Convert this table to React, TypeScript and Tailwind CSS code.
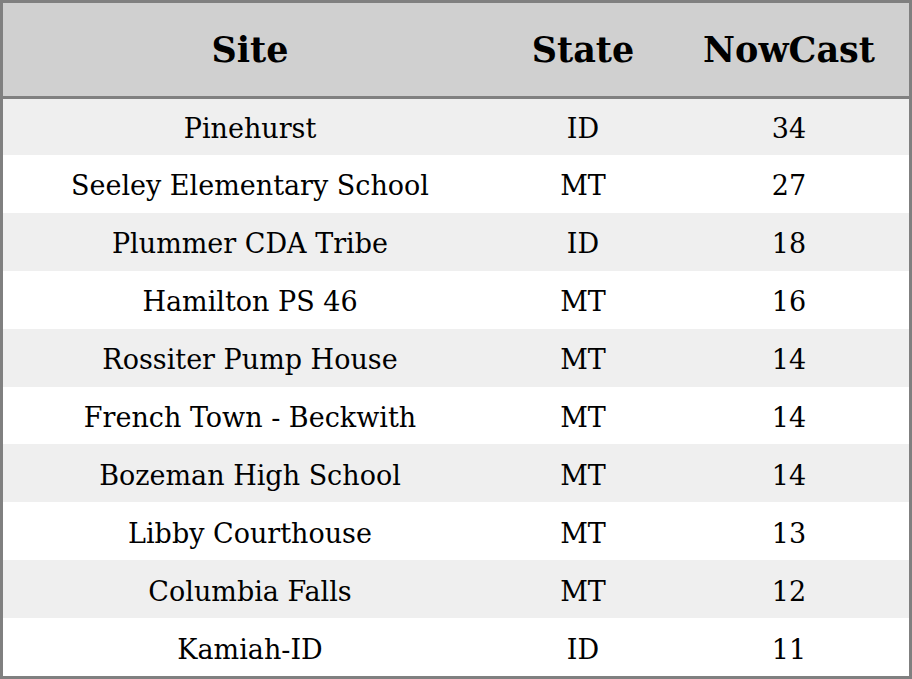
const rows = [
  { site: "Pinehurst", state: "ID", nowcast: 34 },
  { site: "Seeley Elementary School", state: "MT", nowcast: 27 },
  { site: "Plummer CDA Tribe", state: "ID", nowcast: 18 },
  { site: "Hamilton PS 46", state: "MT", nowcast: 16 },
  { site: "Rossiter Pump House", state: "MT", nowcast: 14 },
  { site: "French Town - Beckwith", state: "MT", nowcast: 14 },
  { site: "Bozeman High School", state: "MT", nowcast: 14 },
  { site: "Libby Courthouse", state: "MT", nowcast: 13 },
  { site: "Columbia Falls", state: "MT", nowcast: 12 },
  { site: "Kamiah-ID", state: "ID", nowcast: 11 },
];

export default function App() {
  return (
    <div
      className="w-[912px] h-[679px] border-[3px] border-[#808080] bg-white text-black flex flex-col"
      style={{ fontFamily: '"DejaVu Serif", serif' }}
    >
      <div className="h-[96px] shrink-0 flex items-center bg-[#d0d0d0] border-b-[3px] border-[#808080] text-[35px] leading-none font-bold">
        <div className="w-[494px] text-center">Site</div>
        <div className="w-[172px] text-center">State</div>
        <div className="w-[240px] text-center">NowCast</div>
      </div>
      {rows.map((r, i) => (
        <div
          key={r.site}
          className={`flex items-center pt-[4px] text-[27px] leading-none ${i === 0 ? "h-[56px]" : "h-[58px]"} ${i % 2 === 0 ? "bg-[#efefef]" : "bg-white"}`}
        >
          <div className="w-[494px] text-center">{r.site}</div>
          <div className="w-[172px] text-center">{r.state}</div>
          <div className="w-[240px] text-center">{r.nowcast}</div>
        </div>
      ))}
    </div>
  );
}
